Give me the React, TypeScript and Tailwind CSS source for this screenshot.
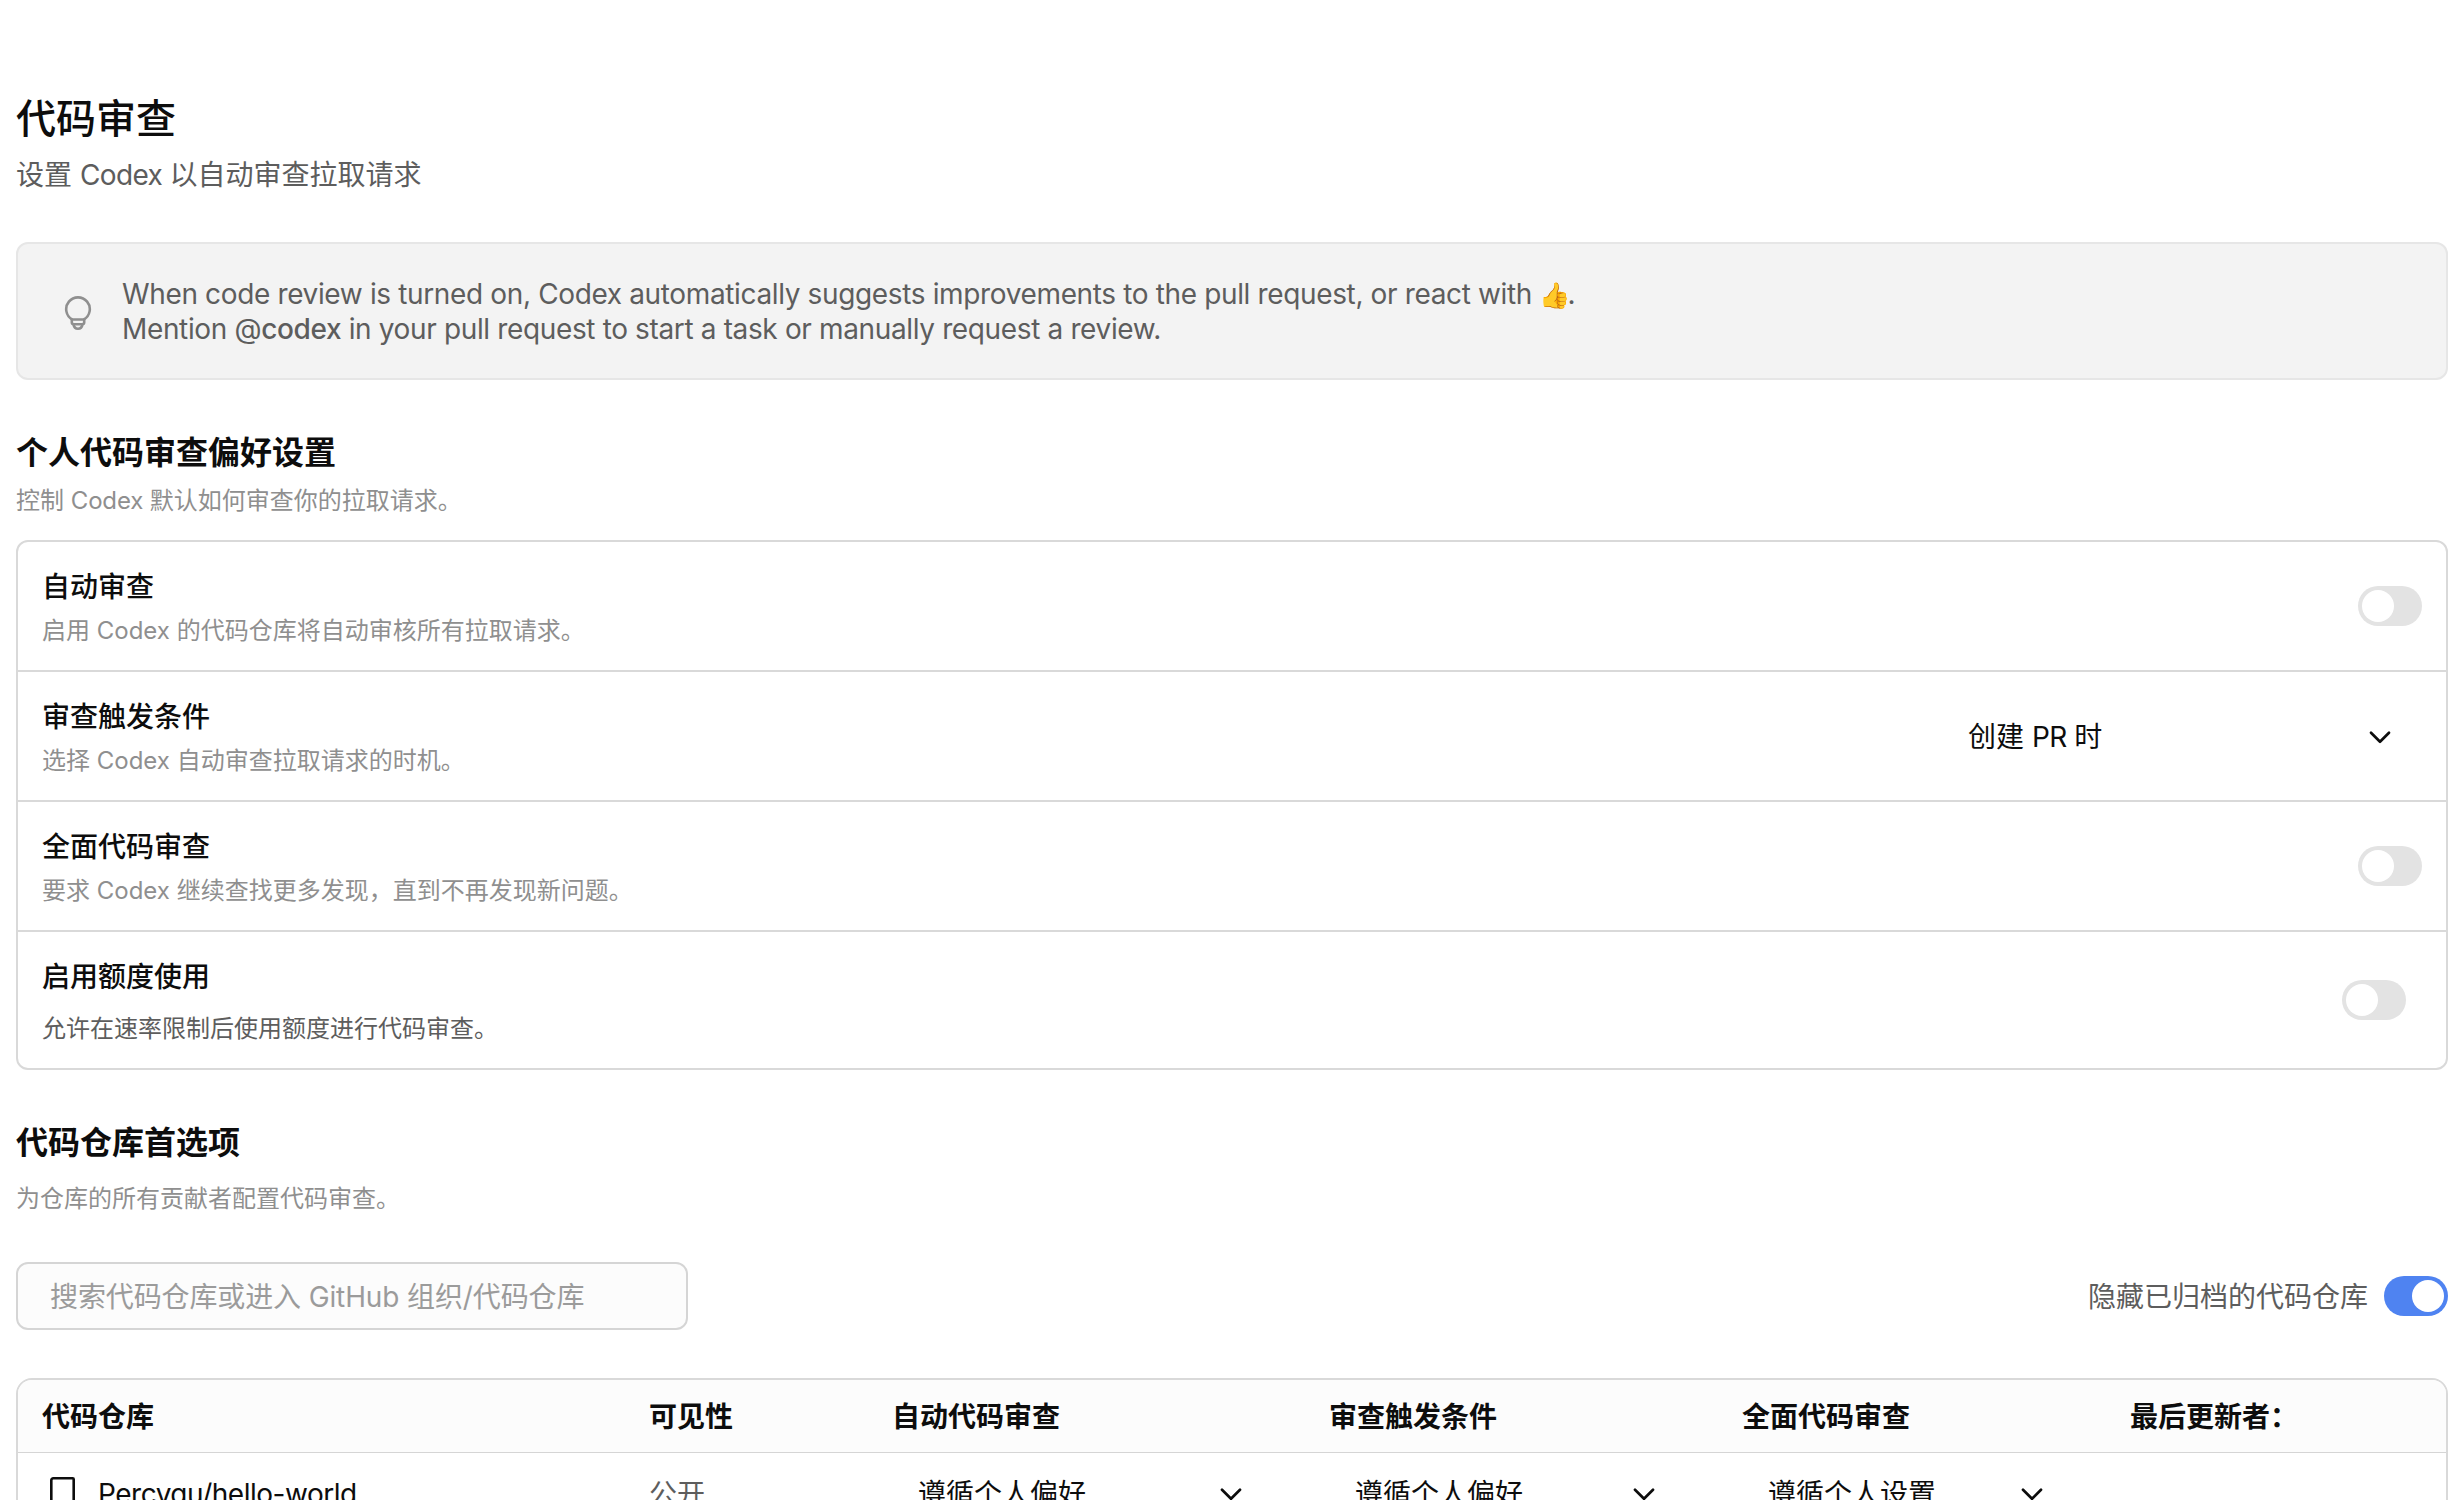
import React from 'react';

const settings = [
  { title: '自动审查', desc: '启用 Codex 的代码仓库将自动审核所有拉取请求。', control: 'toggle' },
  { title: '审查触发条件', desc: '选择 Codex 自动审查拉取请求的时机。', control: 'select' },
  { title: '全面代码审查', desc: '要求 Codex 继续查找更多发现，直到不再发现新问题。', control: 'toggle' },
];

const Toggle = ({ on = false }: { on?: boolean }) => (
  <span className={`flex h-10 w-16 shrink-0 items-center rounded-full p-1 ${on ? 'justify-end bg-[#4f83f1]' : 'bg-[#e3e3e3]'}`}>
    <span className="size-8 rounded-full bg-white" />
  </span>
);

const Chevron = () => (
  <svg className="shrink-0" width="22" height="14" viewBox="0 0 22 14" fill="none" stroke="currentColor" strokeWidth="2.7" strokeLinecap="round" strokeLinejoin="round">
    <path d="M2 2.8 11 11.8 20 2.8" />
  </svg>
);

const Bulb = () => (
  <svg className="mt-1 shrink-0" width="28" height="36" viewBox="0 0 28 36" fill="none" stroke="currentColor" strokeWidth="2.6" strokeLinejoin="round">
    <path d="M8.300 24.500a11.800 11.800 0 1 1 11.400 0" />
    <path d="M7.800 24.500h12.400v2.700a2 2 0 0 1-2 2h-8.400a2 2 0 0 1-2-2z" />
    <path d="M9.500 29.200c.4 2.700 2.100 4.500 4.500 4.500s4.100-1.800 4.500-4.500" />
  </svg>
);

const App = () => (
  <main className="h-[1500px] w-[2450px] overflow-hidden bg-white pt-[89px] pl-4 font-[Inter,'Noto_Sans_CJK_SC',sans-serif] text-[28px] text-[#0d0d0d]">
    <div className="w-[2432px]">
      <h1 className="h-[60px] text-[40px] leading-[60px] font-medium">代码审查</h1>
      <p className="mt-1 h-11 leading-[44px] text-[#5d5d5d]">设置 <span className="tracking-[-0.6px]">Codex </span>以自动审查拉取请求</p>

      <div className="mt-[45px] flex h-[138px] items-center rounded-xl border-2 border-[#e6e6e6] bg-[#f3f3f3] pl-[46px] text-[#5d5d5d]">
        <span className="text-[#8f8f8f]"><Bulb /></span>
        <p className="mt-[2px] ml-[30px] leading-[35px] tracking-[-0.36px]">
          When code review is turned on, Codex automatically suggests improvements to the pull request, or react with <span className="text-[25px] leading-none tracking-[-3px]">👍</span>.<br />
          Mention @<span className="font-medium">codex</span> in your pull request to start a task or manually request a review.
        </p>
      </div>

      <h2 className="mt-[49px] h-12 text-[32px] leading-[48px] font-semibold">个人代码审查偏好设置</h2>
      <p className="mt-[6px] h-9 text-2xl leading-9 text-[#8f8f8f]">控制 <span className="tracking-[-0.15px]">Codex </span>默认如何审查你的拉取请求。</p>

      <div className="mt-[21px] h-[530px] rounded-xl border-2 border-[#d9d9d9]">
        {settings.map(s => (
          <div key={s.title} className="flex h-[130px] items-center justify-between border-b-2 border-[#d9d9d9] pr-6 pl-6">
            <div className="pt-[3px]">
              <div className="h-[42px] leading-[42px] font-medium">{s.title}</div>
              <div className="mt-[5px] h-9 text-2xl leading-9 text-[#8f8f8f]">{s.desc}</div>
            </div>
            {s.control === 'toggle' ? (
              <Toggle />
            ) : (
              <div className="mt-[2px] flex w-[454px] items-center justify-between pr-[31px]">
                <span>创建 <span className="tracking-[-0.5px]">PR </span>时</span>
                <Chevron />
              </div>
            )}
          </div>
        ))}
        <div className="flex h-[136px] items-center justify-between pr-10 pl-6">
          <div className="pt-[3px]">
            <div className="h-[42px] leading-[42px] font-medium">启用额度使用</div>
            <div className="mt-[13px] h-9 text-2xl leading-9 text-[#5d5d5d]">允许在速率限制后使用额度进行代码审查。</div>
          </div>
          <Toggle />
        </div>
      </div>

      <h2 className="mt-[49px] h-12 text-[32px] leading-[48px] font-semibold">代码仓库首选项</h2>
      <p className="mt-[14px] h-9 text-2xl leading-9 text-[#8f8f8f]">为仓库的所有贡献者配置代码审查。</p>

      <div className="mt-[45px] flex h-[68px] items-center justify-between">
        <input
          className="h-[68px] w-[672px] rounded-xl border-2 border-[#d5d5d5] bg-[#fcfcfc] px-8 pt-px tracking-[-0.12px] placeholder:text-[#9b9b9b]"
          placeholder="搜索代码仓库或进入 GitHub 组织/代码仓库"
        />
        <label className="flex items-center gap-4 text-[#5d5d5d]"><span className="pt-px">隐藏已归档的代码仓库</span><Toggle on /></label>
      </div>

      <div className="mt-12 h-[300px] overflow-hidden rounded-2xl border-2 border-[#d9d9d9]">
        <div className="grid h-[73px] grid-cols-[607px_243px_437px_413px_388px_1fr] items-center border-b border-[#d5d5d5] bg-[#fcfcfc] pt-px pl-6 font-semibold">
          <span>代码仓库</span>
          <span>可见性</span>
          <span>自动代码审查</span>
          <span>审查触发条件</span>
          <span>全面代码审查</span>
          <span>最后更新者：</span>
        </div>
        <div className="grid h-[82px] grid-cols-[607px_243px_437px_413px_388px_1fr] items-center pl-6">
          <span className="flex items-center gap-[23px] pl-2">
            <svg className="mb-[3px]" width="25" height="32" viewBox="0 0 25 32" fill="none" stroke="currentColor" strokeWidth="2.6" strokeLinecap="round" strokeLinejoin="round">
              <path d="M1.300 31V3.300a2 2 0 0 1 2-2h19.400a1 1 0 0 1 1 1V31l-11-6z" />
            </svg>
            <span className="tracking-[-0.48px]">Percyqu/hello-world</span>
          </span>
          <span className="text-[#5d5d5d]">公开</span>
          <span className="flex items-center justify-between pr-[87px] pl-[26px]">遵循个人偏好<Chevron /></span>
          <span className="flex items-center justify-between pr-[87px] pl-[26px]">遵循个人偏好<Chevron /></span>
          <span className="flex items-center justify-between pr-[87px] pl-[26px]">遵循个人设置<Chevron /></span>
        </div>
      </div>
    </div>
  </main>
);

export default App;
